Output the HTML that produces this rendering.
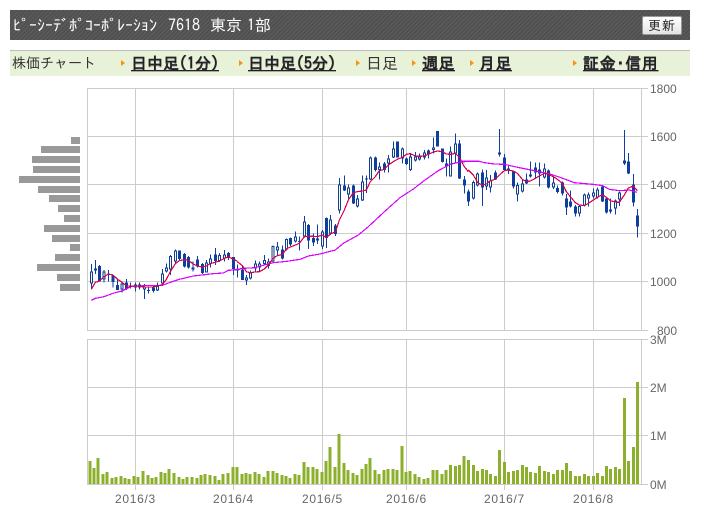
<!DOCTYPE html>
<html lang="ja">
<head>
<meta charset="utf-8">
<title>チャート</title>
<style>
html,body{margin:0;padding:0;background:#fff;width:701px;height:519px;overflow:hidden}
body{position:relative;font-family:"Liberation Sans","IPAGothic","Noto Sans CJK JP",sans-serif}
.a{position:absolute;white-space:nowrap}
#hd{left:10px;top:10px;width:680px;height:30px;background:repeating-linear-gradient(135deg,#5a5a5a 0,#5a5a5a 1.5px,#4f4f4f 1.5px,#4f4f4f 3px)}
.t{color:#fff;font:16px/20px "IPAGothic","Noto Sans CJK JP",sans-serif;top:15px}
#btn{left:642px;top:16px;width:38px;height:17px;border:1px solid #999;border-radius:2px;background:linear-gradient(#fff,#e4e4e4);color:#222;font:13px/17px "IPAGothic","Noto Sans CJK JP",sans-serif;text-align:center;letter-spacing:1px}
#nav{left:10px;top:50px;width:680px;height:25px;background:#e8f2d8;border-top:1px solid #bbb}
.n{top:54px;font:16px/18px "IPAGothic","Noto Sans CJK JP",sans-serif;color:#333}
.l{font-weight:bold;text-decoration:underline;text-decoration-thickness:1px;text-underline-offset:1px;text-shadow:0 1px 0 #aaa;color:#222}
.arr{width:0;height:0;top:60px;border-left:4px solid #f7930e;border-top:3.5px solid transparent;border-bottom:3.5px solid transparent}
.y{left:650px;color:#666;font:12px/14px "Liberation Sans",sans-serif}
.x{top:492px;color:#666;font:12px/14px "Liberation Sans",sans-serif;letter-spacing:.7px}
svg{position:absolute;left:0;top:0}
</style>
</head>
<body>
<div id="hd" class="a"></div>
<div class="a t" style="left:13px">ﾋﾟｰｼｰﾃﾞﾎﾟｺｰﾎﾟﾚｰｼｮﾝ</div>
<div class="a t" style="left:168px">7618</div>
<div class="a t" style="left:210px">東京</div>
<div class="a t" style="left:247px">1部</div>
<div id="btn" class="a">更新</div>

<div id="nav" class="a"></div>
<div class="a n" style="left:12px;font-size:14px">株価チャート</div>
<div class="a arr" style="left:121px"></div><div class="a n l" style="left:131px">日中足(1分)</div>
<div class="a arr" style="left:239px"></div><div class="a n l" style="left:248px">日中足(5分)</div>
<div class="a arr" style="left:356px"></div><div class="a n" style="left:366px">日足</div>
<div class="a arr" style="left:412px"></div><div class="a n l" style="left:422px;letter-spacing:.5px">週足</div>
<div class="a arr" style="left:470px"></div><div class="a n l" style="left:479px;letter-spacing:.5px">月足</div>
<div class="a arr" style="left:573px"></div><div class="a n l" style="left:583px;letter-spacing:.7px">証金･信用</div>

<svg width="701" height="519" viewBox="0 0 701 519" shape-rendering="crispEdges" fill="none">
<!-- grid -->
<path stroke="#ccc" d="M87.5 88V331M135.5 88V331M233.5 88V331M322.5 88V331M406.5 88V331M504.5 88V331M593.5 88V331M641.5 88V331
M87 88.5H648M87 136.5H648M87 184.5H648M87 233.5H648M87 281.5H648M87 330.5H648
M87.5 339V485M135.5 339V490M233.5 339V490M322.5 339V490M406.5 339V490M504.5 339V490M593.5 339V490M641.5 339V485
M87 339.5H648M87 387.5H648M87 435.5H648M87 484.5H648"/>
<!-- price profile -->
<path fill="#999" d="M71 137h9v7h-9zM41 146h39v7H41zM32 156h48v7H32zM33 166h47v7H33zM19 176h61v7H19zM38 186h42v7H38zM49 195h31v7H49zM58 205h22v7H58zM64 215h16v7H64zM44 225h36v7H44zM52 235h28v7H52zM70 244h10v7H70zM55 254h25v7H55zM37 264h43v7H37zM57 274h23v7H57zM60 284h20v7H60z"/>
<!-- volume -->
<g transform="translate(80 420) scale(.33333)" stroke="#8db02c" stroke-width="9">
<path d="M30 192V123M42 192V144M54 192V114M69 192V162M81 192V156M96 192V174M108 192V171M123 192V168M135 192V174M147 192V177M162 192V168M174 192V171M189 192V153M204 192V165M216 192V174M228 192V171M243 192V156M255 192V159M267 192V147M282 192V159M297 192V171M309 192V177M321 192V171M336 192V171M351 192V174M363 192V165M375 192V162M390 192V165M405 192V168M417 192V180M429 192V162M444 192V159M459 192V141M471 192V141M486 192V162M498 192V159M510 192V162M525 192V156M537 192V162M552 192V171M564 192V153M579 192V153M591 192V159M606 192V165M618 192V168M630 192V174M645 192V162M657 192V165M672 192V126M684 192V141M699 192V141M711 192V147M726 192V156M738 192V123M750 192V81M765 192V141M777 192V42M792 192V129M804 192V150M819 192V159M831 192V165M846 192V147M858 192V132M870 192V114M885 192V150M897 192V162M912 192V150M924 192V147"/>
</g>
<g transform="translate(390 370) scale(.33333)" stroke="#8db02c" stroke-width="9">
<path d="M9 342V297M21 342V300M36 342V228M48 342V306M60 342V303M75 342V312M87 342V321M102 342V327M114 342V324M129 342V300M141 342V300M156 342V312M168 342V300M181 342V285M196 342V288M208 342V285M222 342V258M235 342V270M250 342V285M262 342V303M277 342V297M289 342V300M301 342V312M316 342V318M328 342V240M343 342V276M355 342V306M370 342V303M382 342V300M397 342V285M409 342V291M421 342V306M436 342V309M448 342V288M463 342V303M475 342V306M490 342V312M502 342V300M517 342V300M529 342V279M541 342V303M556 342V318M568 342V318M583 342V312M595 342V318M610 342V318M622 342V309M637 342V318M649 342V288M661 342V297M676 342V291M688 342V297M703 342V84M715 342V273M730 342V231M742 342V36"/>
</g>
<!-- candles left -->
<g transform="translate(0 120) scale(.33333)">
<path stroke="#0f3f9e" stroke-width="3" d="M274 432V508M286 420V462M298 435V485M312 450V488M325 450V484M339 463V503M352 475V510M366 484V518M379 477V510M392 487V505M406 488V515M418 487V508M433 492V537M445 500V520M460 495V518M472 487V513M487 447V495M499 430V457M511 405V465M526 388V430M538 391V420M553 399V442M565 408V446M579 425V455M592 408V442M607 429V462M619 420V458M632 403V443M646 384V435M658 399V426M673 390V425M685 396V420M700 411V465"/>
<path stroke="#0f3f9e" stroke-width="9" d="M274 454V490M286 445V452M298 438V484M312 454V478M325 462V465M339 466V486M352 495V510M366 490V508M379 487V505M392 497V500M406 493V503M418 493V503M433 500V509M445 510V513M460 502V513M472 498V512M487 460V490M499 442V455M511 408V448M526 391V425M538 391V417M553 402V440M565 411V443M579 442V449M592 418V440M607 432V459M619 428V458M632 415V432M646 403V423M658 405V423M673 403V415M685 399V414M700 411V447"/>
<path stroke="#fffbd0" stroke-width="3" d="M274 457V487M312 457V475M366 493V505M433 503V506M472 501V509M487 463V487M499 445V452M511 411V445M526 394V422M579 445V446M619 431V455M632 418V429M658 408V420M673 406V412"/>
</g>
<!-- candles middle -->
<g transform="translate(230 120) scale(.33333)">
<path stroke="#0f3f9e" stroke-width="3" d="M22 433V473M37 436V480M49 465V495M61 452V478M76 421V458M88 424V455M103 405V433M115 415V445M129 376V430M142 366V405M157 376V418M169 355V392M181 352V378M196 334V368M208 349V392M223 288V352M235 312V387M250 340V378M262 313V372M277 330V387M289 292V384M301 285V345M317 312V348M328 174V280M343 166V213M355 193V240M370 193V252M382 225V262M397 166V243M409 166V219M421 109V180M436 109V155M448 127V178M463 126V157M475 105V157M490 64V114M502 64V112M517 82V130M529 112V135M541 100V153M556 96V125M568 100V122M583 90V118M595 88V116M610 52V100M622 33V80M637 85V128M649 115V170M661 80V170M676 40V130M688 60V177"/>
<path stroke="#0f3f9e" stroke-width="9" d="M22 448V451M37 448V480M49 472V482M61 457V475M76 430V445M88 430V442M103 420V432M115 424V438M129 378V425M142 379V392M157 388V415M169 357V388M181 354V373M196 349V364M208 363V366M223 304V350M235 315V361M250 354V368M262 355V362M277 334V380M289 294V354M301 298V340M317 316V342M328 193V271M343 196V212M355 202V223M370 196V250M382 235V260M397 184V241M409 175V178M421 112V178M436 112V150M448 139V150M463 130V150M475 115V130M490 85V112M502 64V112M517 85V115M529 115V132M541 109V150M556 110V122M568 110V119M583 97V112M595 91V103M610 82V90M622 33V80M637 85V126M649 130V139M661 95V169M676 70V100M688 70V175"/>
<path stroke="#fffbd0" stroke-width="3" d="M49 475V479M61 460V472M76 433V442M88 433V439M103 423V429M115 427V435M129 381V422M142 382V389M169 360V385M196 352V361M223 307V347M262 358V359M277 337V377M301 301V337M328 196V268M355 205V220M382 238V257M397 187V238M421 115V175M448 142V147M475 118V127M490 88V109M517 88V112M541 112V147M556 113V119M568 113V116M583 100V109M610 85V87M661 98V166M676 73V97"/>
</g>
<!-- candles right -->
<g transform="translate(461 120) scale(.33333)">
<path stroke="#0f3f9e" stroke-width="3" d="M10 168V221M22 208V258M37 182V238M50 157V200M64 148V258M76 150V210M88 165V218M103 151V180M115 27V110M130 102V150M142 133V162M157 152V205M169 187V245M184 178V217M196 160V192M208 124V173M223 127V172M235 128V200M250 130V175M262 148V205M277 170V207M289 197V220M304 184V227M316 222V285M328 212V262M343 255V290M355 254V290M370 220V259M382 218V260M397 205V235M409 203V236M424 196V246M436 232V280M448 235V280M463 238V283M475 215V258M490 30V135M502 99V162M517 162V260M529 267V353"/>
<path stroke="#0f3f9e" stroke-width="9" d="M10 178V197M22 214V245M37 186V235M50 160V196M64 157V203M76 172V200M88 182V203M103 157V178M115 97V104M130 112V150M142 146V149M157 155V200M169 195V223M184 190V214M196 178V190M208 163V170M223 142V157M235 148V161M250 145V172M262 151V202M277 187V203M289 204V216M304 187V221M316 235V263M328 244V259M343 259V281M355 258V281M370 223V256M382 223V235M397 217V230M409 208V232M424 199V244M436 235V278M448 268V275M463 241V265M475 218V238M490 121V130M502 124V160M517 193V248M529 286V320"/>
<path stroke="#fffbd0" stroke-width="3" d="M37 189V232M50 163V193M76 175V197M88 185V200M115 100V101M169 198V220M184 193V211M208 166V167M250 148V169M277 190V200M355 261V278M370 226V253M382 226V232M397 220V227M409 211V229M448 271V272M463 244V262M475 221V235"/>
</g>
<!-- moving averages -->
<g transform="translate(0 120) scale(.33333)" stroke-width="3.6">
<path stroke="#d900ff" d="M274 541L286 535L312 530L339 520L366 513L392 500L433 497L487 496L511 487L538 478L580 468L640 461L670 459L685 451L720 448"/>
<path stroke="#d9004c" d="M274 508L286 487L298 484L312 470L325 462L339 465L352 477L366 487L379 497L392 499L406 497L418 499L433 501L460 501L487 494L499 478L511 455L526 431L538 422L553 419L565 420L579 432L592 438L607 441L619 438L632 430L646 427L658 423L673 415L685 411L700 417L712 424"/>
</g>
<g transform="translate(230 120) scale(.33333)" stroke-width="3.6">
<path stroke="#d900ff" d="M0 451L40 445L76 443L103 435L130 428L170 424L210 418L235 408L270 402L316 390L340 370L385 345L415 320L460 278L510 233L550 207L585 180L625 152L660 133L690 126L720 124"/>
<path stroke="#d9004c" d="M22 425L37 437L49 455L61 458L76 456L88 455L103 447L115 435L129 415L142 407L157 403L169 387L181 381L196 375L208 370L223 350L235 349L250 349L262 350L277 345L289 353L301 342L317 335L328 300L343 270L355 240L370 218L382 215L397 213L409 210L421 185L436 170L448 152L463 148L475 135L490 125L502 118L517 112L529 103L541 101L556 108L568 109L583 108L595 103L610 96L622 93L637 95L649 102L661 103L676 100L688 112L703 140L715 155"/>
</g>
<g transform="translate(461 120) scale(.33333)" stroke-width="3.6">
<path stroke="#d900ff" d="M0 124L55 124L70 128L100 132L130 133L175 143L220 152L270 163L300 173L340 188L395 193L425 197L445 208L475 212L505 210L528 217"/>
<path stroke="#d9004c" d="M22 150L37 165L50 188L64 195L76 192L88 182L103 178L115 165L130 152L142 150L157 153L169 160L184 178L196 185L208 183L223 175L235 168L250 160L262 163L277 170L289 178L304 190L316 215L328 230L343 248L355 255L370 257L382 250L397 240L409 232L424 224L436 232L448 242L463 246L475 247L490 225L502 204L517 198L529 212"/>
</g>
</svg>

<div class="a y" style="top:82px">1800</div>
<div class="a y" style="top:130px">1600</div>
<div class="a y" style="top:178px">1400</div>
<div class="a y" style="top:227px">1200</div>
<div class="a y" style="top:275px">1000</div>
<div class="a y" style="top:324px;left:657px">800</div>
<div class="a y" style="top:333px">3M</div>
<div class="a y" style="top:381px">2M</div>
<div class="a y" style="top:429px">1M</div>
<div class="a y" style="top:478px">0M</div>

<div class="a x" style="left:115px">2016/3</div>
<div class="a x" style="left:213px">2016/4</div>
<div class="a x" style="left:302px">2016/5</div>
<div class="a x" style="left:386px">2016/6</div>
<div class="a x" style="left:484px">2016/7</div>
<div class="a x" style="left:573px">2016/8</div>
</body>
</html>
